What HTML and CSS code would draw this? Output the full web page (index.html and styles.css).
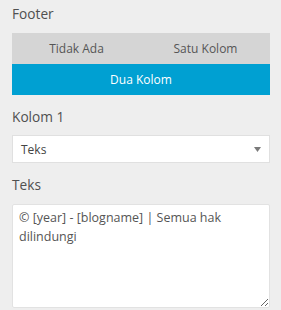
FILE: index.html
```html
<!DOCTYPE html>
<html lang="id">
<head>
<meta charset="utf-8">
<title>Footer</title>
<link rel="stylesheet" href="styles.css">
</head>
<body>
<div class="panel">
  <div class="field field-footer">
    <div class="label">Footer</div>
    <div class="btn-group">
      <div class="btn">Tidak Ada</div>
      <div class="btn">Satu Kolom</div>
      <div class="btn active">Dua Kolom</div>
    </div>
  </div>
  <div class="field field-kolom">
    <div class="label">Kolom 1</div>
    <div class="select">
      <span class="select-value">Teks</span>
      <svg class="arrow" width="7" height="5" viewBox="0 0 7 5"><path d="M0 0H7L3.5 5Z" fill="#7a7a7a"/></svg>
    </div>
  </div>
  <div class="field field-teks">
    <div class="label">Teks</div>
    <textarea class="textarea">© [year] - [blogname] | Semua hak dilindungi</textarea>
  </div>
</div>
</body>
</html>
```

FILE: styles.css
```css
html, body {
  margin: 0;
  padding: 0;
  background: #eeeeee;
}
body {
  font-family: "Open Sans", "Noto Sans", sans-serif;
  color: #555555;
}
.panel {
  width: 258px;
  padding: 4px 11px 0 12px;
}
.label {
  font-size: 13.7px;
  line-height: 20px;
  color: #505050;
}
.field-footer .label { margin-bottom: 9px; }
.field-kolom { margin-top: 12px; }
.field-kolom .label { margin-bottom: 8px; }
.field-teks { margin-top: 12px; }
.field-teks .label { margin-bottom: 9px; }

.btn-group {
  display: grid;
  grid-template-columns: 1fr 1fr;
  background: #d5d5d5;
}
.btn {
  height: 31px;
  display: flex;
  align-items: center;
  justify-content: center;
  font-size: 12px;
  color: #555555;
}
.btn.active {
  grid-column: 1 / span 2;
  background: #00a0d2;
  color: #ffffff;
}
.select {
  box-sizing: border-box;
  height: 28px;
  background: #ffffff;
  border: 1px solid #e0e0e0;
  display: flex;
  align-items: center;
  justify-content: space-between;
  padding: 0 8px 0 8px;
  font-size: 12px;
  color: #444444;
}
.arrow { display: block; margin-top: 0px; }
.textarea {
  display: block;
  box-sizing: border-box;
  width: 258px;
  height: 104px;
  margin: 0;
  border: 1px solid #e2e2e2;
  border-radius: 2px;
  background: #ffffff;
  padding: 3px 6px;
  font-family: "Open Sans", "Noto Sans", sans-serif;
  font-size: 12.5px;
  line-height: 19px;
  color: #555555;
  outline: none;
}
```
